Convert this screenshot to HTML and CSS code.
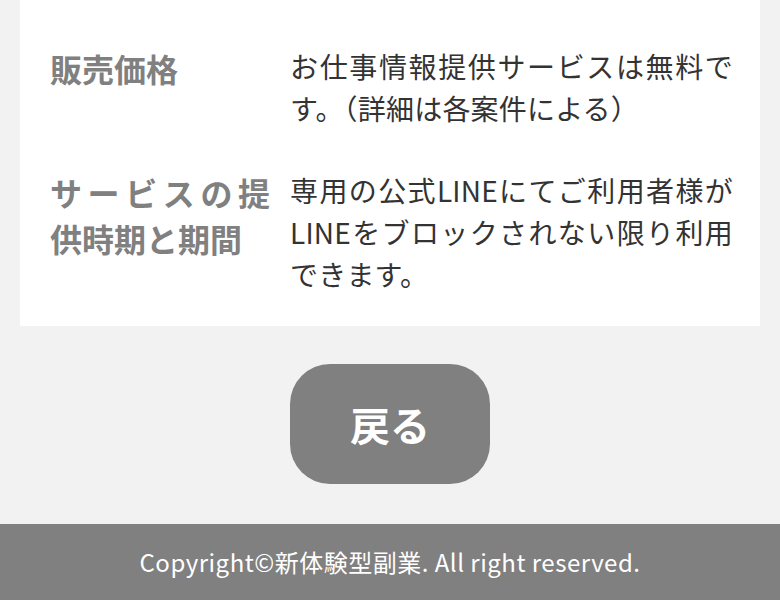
FILE: index.html
```html
<!DOCTYPE html>
<html lang="ja">
<head>
<meta charset="utf-8">
<title>特定商取引法に基づく表記</title>
<link rel="stylesheet" href="styles.css">
</head>
<body>
<main class="page">
  <section class="card">
    <dl class="spec">
      <div class="spec-row">
        <dt class="spec-label">販売価格</dt>
        <dd class="spec-value">お仕事情報提供サービスは無料です。（詳細は各案件による）</dd>
      </div>
      <div class="spec-row">
        <dt class="spec-label">サービスの提供時期と期間</dt>
        <dd class="spec-value">専用の公式LINEにてご利用者様がLINEをブロックされない限り利用できます。</dd>
      </div>
    </dl>
  </section>
  <div class="actions">
    <a class="back-btn" href="#">戻る</a>
  </div>
</main>
<footer class="site-footer">
  <p class="copyright">Copyright©新体験型副業. All right reserved.</p>
</footer>
</body>
</html>
```

FILE: styles.css
```css
* { box-sizing: border-box; }
html, body {
  margin: 0;
  padding: 0;
  background: #f2f2f2;
  font-family: "Noto Sans CJK JP", "Noto Sans", sans-serif;
}
.page {
  padding: 0 20px;
}
.card {
  background: #ffffff;
  padding: 45px 27px 31px 30px;
}
.spec {
  margin: 0;
  display: flex;
  flex-direction: column;
  gap: 40px;
}
.spec-row {
  display: flex;
  gap: 20px;
  align-items: flex-start;
}
.spec-label {
  flex: 0 0 220px;
  margin: 0;
  color: #808080;
  font-weight: 700;
  font-size: 32px;
  line-height: 46px;
  text-align: justify;
}
.spec-value {
  flex: 1 1 auto;
  margin: 0;
  color: #333333;
  font-size: 28px;
  line-height: 42px;
  letter-spacing: 0.2px;
  text-align: justify;
}
.actions {
  display: flex;
  justify-content: center;
  padding: 38px 0 40px;
}
.back-btn {
  display: flex;
  align-items: center;
  justify-content: center;
  width: 200px;
  height: 120px;
  border-radius: 40px;
  background: #808080;
  color: #ffffff;
  font-weight: 700;
  font-size: 40px;
  text-decoration: none;
}
.site-footer {
  background: #808080;
  height: 76px;
  display: flex;
  align-items: center;
  justify-content: center;
}
.copyright {
  margin: 0;
  color: #ffffff;
  font-size: 24px;
  line-height: 1;
  letter-spacing: 0.5px;
}
```
